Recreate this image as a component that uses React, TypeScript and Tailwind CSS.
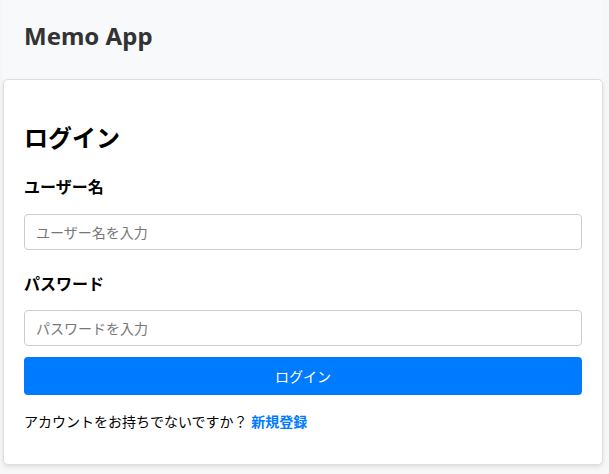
export default function App() {
  return (
    <div
      className="min-h-[474px] bg-[#f7f7f7] text-black"
      style={{ fontFamily: '"Noto Sans", "Noto Sans CJK JP", sans-serif' }}
    >
      <div className="ml-[3px] w-[600px]">
        <header className="h-[79px] bg-[#f8f9fa] px-[21px] pt-[22px]">
          <h1 className="text-[24px] font-bold leading-[28px] text-[#333]">Memo App</h1>
        </header>

        <main className="rounded-[5px] border border-[#dedede] bg-white px-[20px] pt-[43px] pb-[32px] shadow-[0_2px_4px_rgba(0,0,0,0.1)]">
          <h2 className="text-[24px] font-bold leading-[29px]">ログイン</h2>

          <form className="mt-[23px]" onSubmit={(e) => e.preventDefault()}>
            <label className="block text-[16px] font-bold leading-[24px]">ユーザー名</label>
            <input
              type="text"
              placeholder="ユーザー名を入力"
              className="mt-[15px] block h-[36px] w-full rounded-[4px] border border-[#ccc] px-[11px] text-[14px] placeholder:text-[#777] outline-none"
            />

            <label className="mt-[22px] block text-[16px] font-bold leading-[24px]">パスワード</label>
            <input
              type="password"
              placeholder="パスワードを入力"
              className="mt-[14px] block h-[36px] w-full rounded-[4px] border border-[#ccc] px-[11px] text-[14px] placeholder:text-[#777] outline-none"
            />

            <button
              type="submit"
              className="mt-[11px] block h-[38px] w-full rounded-[4px] bg-[#007bff] text-[14px] text-white"
            >
              ログイン
            </button>
          </form>

          <p className="mt-[16px] text-[14px] leading-[21px]">
            アカウントをお持ちでないですか？{" "}
            <a href="#" className="font-bold text-[#007bff]">
              新規登録
            </a>
          </p>
        </main>
      </div>
    </div>
  );
}
